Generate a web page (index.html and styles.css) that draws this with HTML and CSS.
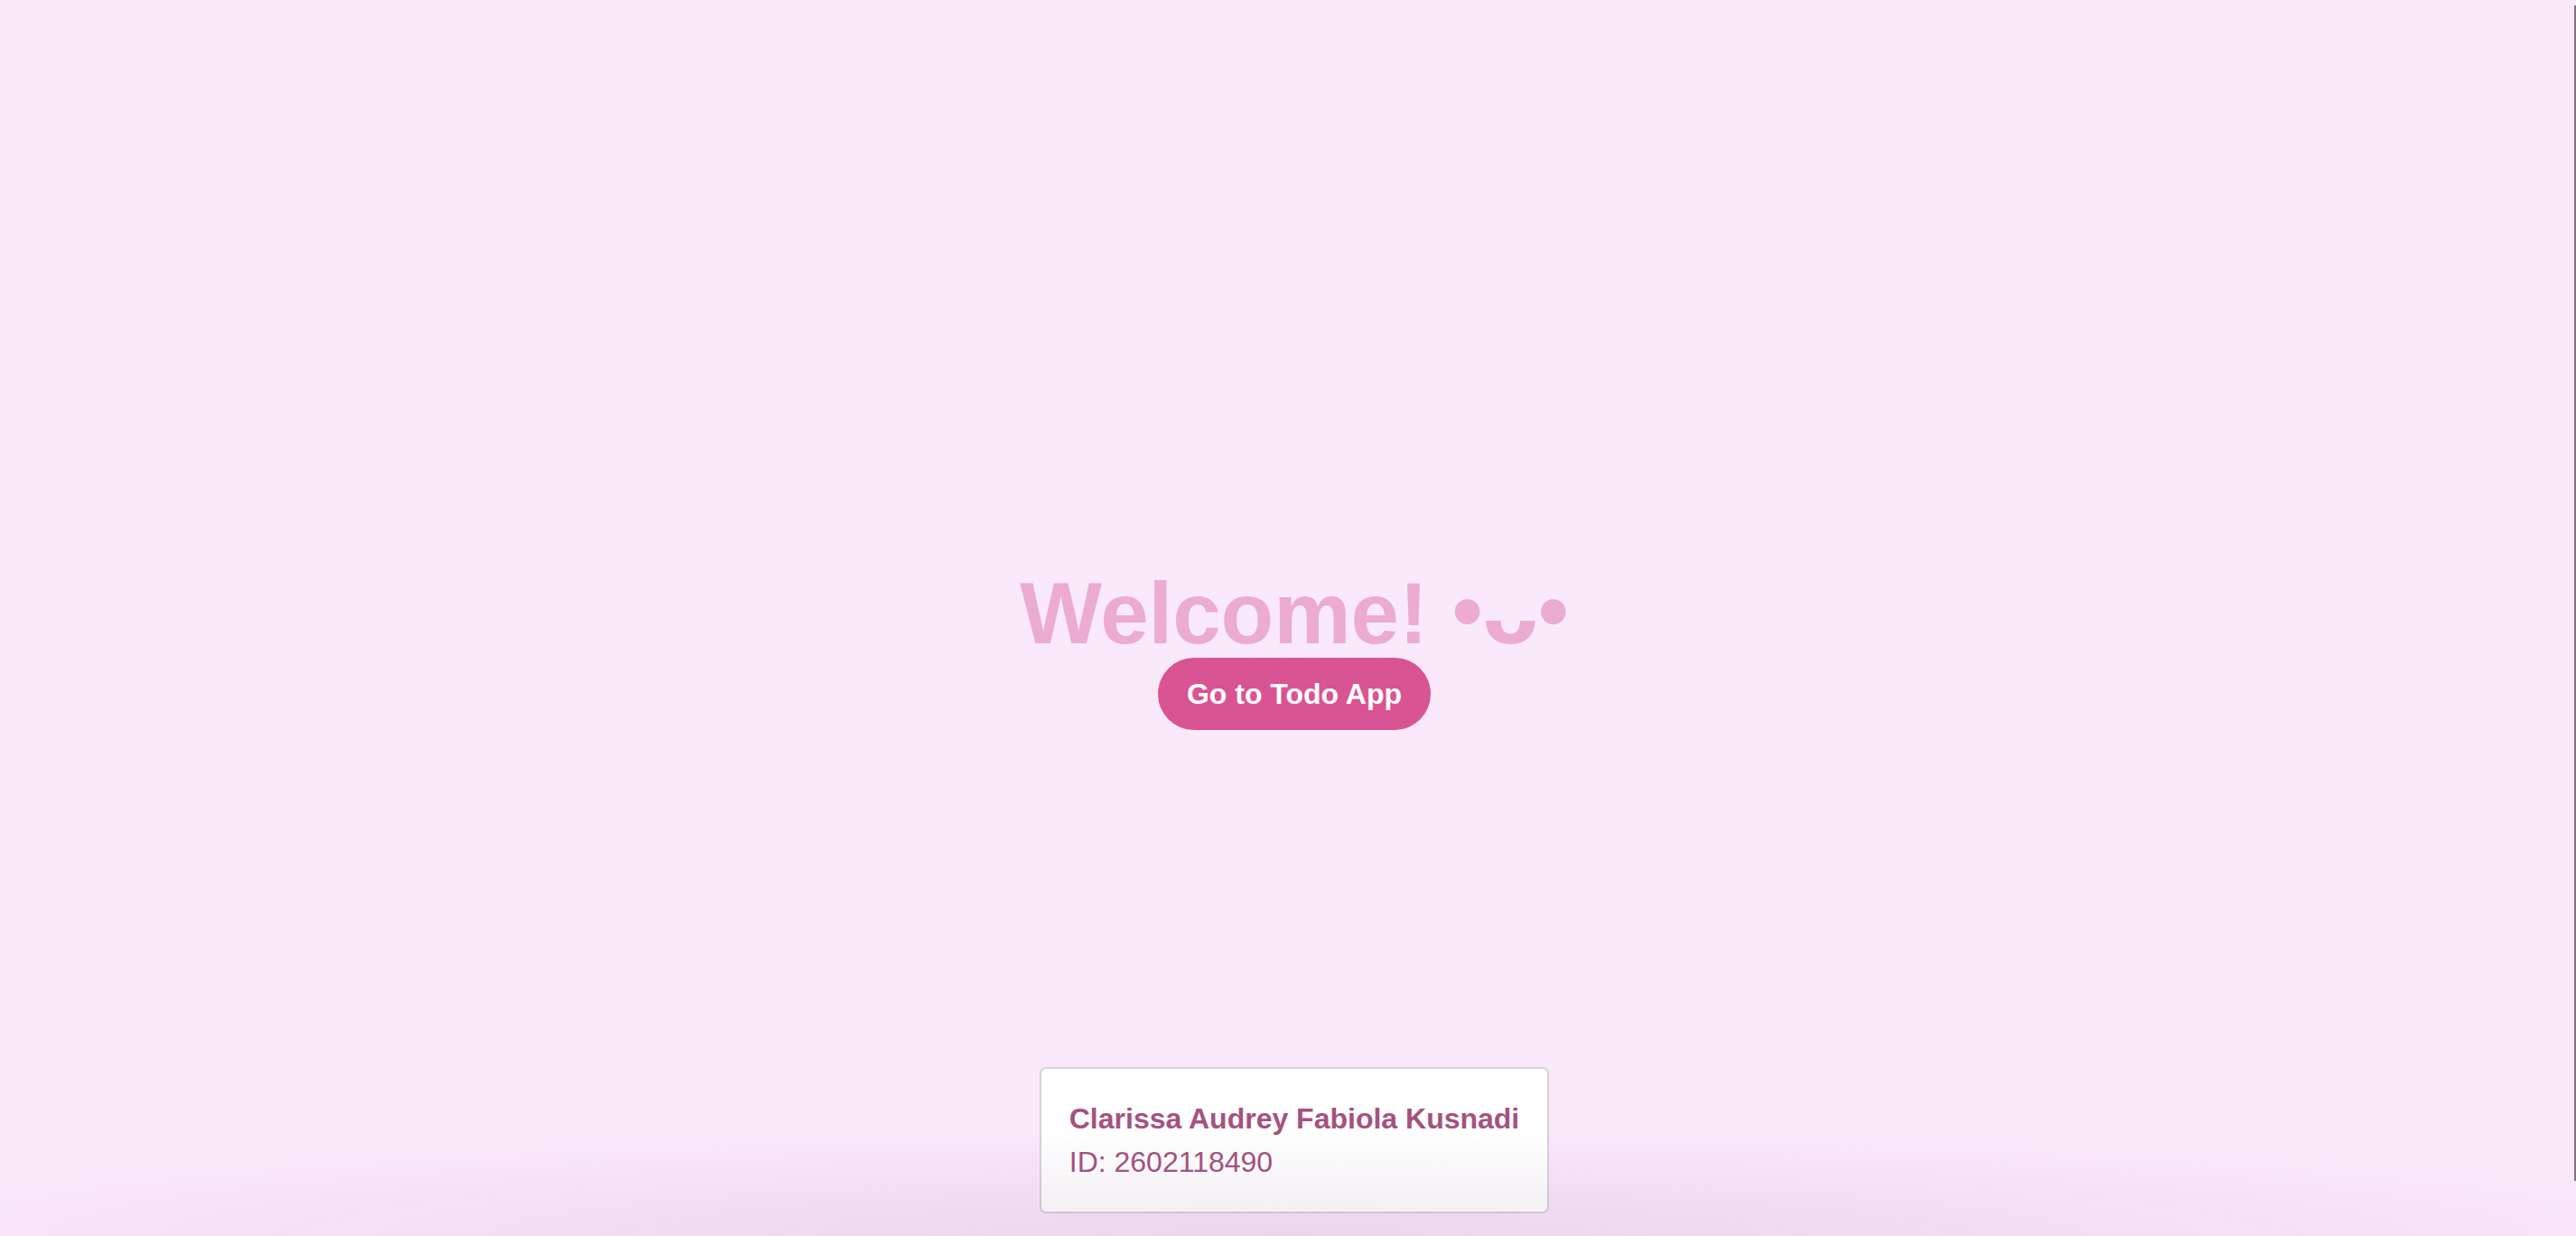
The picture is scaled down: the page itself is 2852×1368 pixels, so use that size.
FILE: index.html
```html
<!DOCTYPE html>
<html lang="en">
<head>
<meta charset="utf-8">
<title>Welcome</title>
<link rel="stylesheet" href="styles.css">
</head>
<body>
<div class="page">
  <main class="hero">
    <h1 class="title">Welcome! <span class="face"><span class="eye">•</span><span class="mouth">ᴗ</span><span class="eye">•</span></span></h1>
    <a class="cta" href="#">Go to Todo App</a>
  </main>
  <footer class="footer">
    <div class="card">
      <p class="name">Clarissa Audrey Fabiola Kusnadi</p>
      <p class="id">ID: 2602118490</p>
    </div>
  </footer>
</div>
<div class="edge"></div>
<div class="vignette"></div>
</body>
</html>
```
FILE: styles.css
```css
html, body {
  margin: 0;
  height: 100%;
}
body {
  background: #fae8fb;
  font-family: "Liberation Sans", Arial, Helvetica, sans-serif;
  overflow: hidden;
}
.page {
  box-sizing: border-box;
  min-height: 100vh;
  display: flex;
  flex-direction: column;
  align-items: center;
  padding-left: 14px;
}
.hero {
  display: flex;
  flex-direction: column;
  align-items: center;
  padding-top: 631px;
}
.title {
  margin: 0;
  height: 96px;
  font-size: 96px;
  line-height: 96px;
  font-weight: 700;
  color: #ecabd1;
  white-space: nowrap;
}
.eye {
  font-family: "Liberation Sans", Arial, sans-serif;
  position: relative;
  top: -3px;
}
.mouth {
  font-family: "DejaVu Sans", sans-serif;
  font-weight: 700;
  font-size: 90px;
  line-height: 0;
}
.cta {
  display: block;
  margin-top: 1px;
  padding: 20px 32px;
  line-height: 40px;
  font-size: 32px;
  font-weight: 700;
  color: #ffffff;
  background: #d95492;
  border-radius: 40px;
  text-decoration: none;
}
.footer {
  margin-top: auto;
  padding-bottom: 25px;
}
.card {
  background: #ffffff;
  border: 2px solid #d3d2db;
  border-radius: 7px;
  padding: 31px 31px;
  color: #a5527f;
  font-size: 32px;
  line-height: 48px;
}
.card p {
  margin: 0;
  white-space: nowrap;
}
.name {
  font-weight: 700;
}
.edge {
  position: fixed;
  right: 0;
  top: 6px;
  bottom: 61px;
  width: 2px;
  background: #7c7381;
}
.vignette {
  position: fixed;
  left: 0;
  right: 0;
  bottom: 0;
  height: 120px;
  pointer-events: none;
  background: radial-gradient(ellipse 60% 100% at 50% 100%, rgba(120, 70, 120, 0.11), rgba(120, 70, 120, 0) 100%);
}
```
